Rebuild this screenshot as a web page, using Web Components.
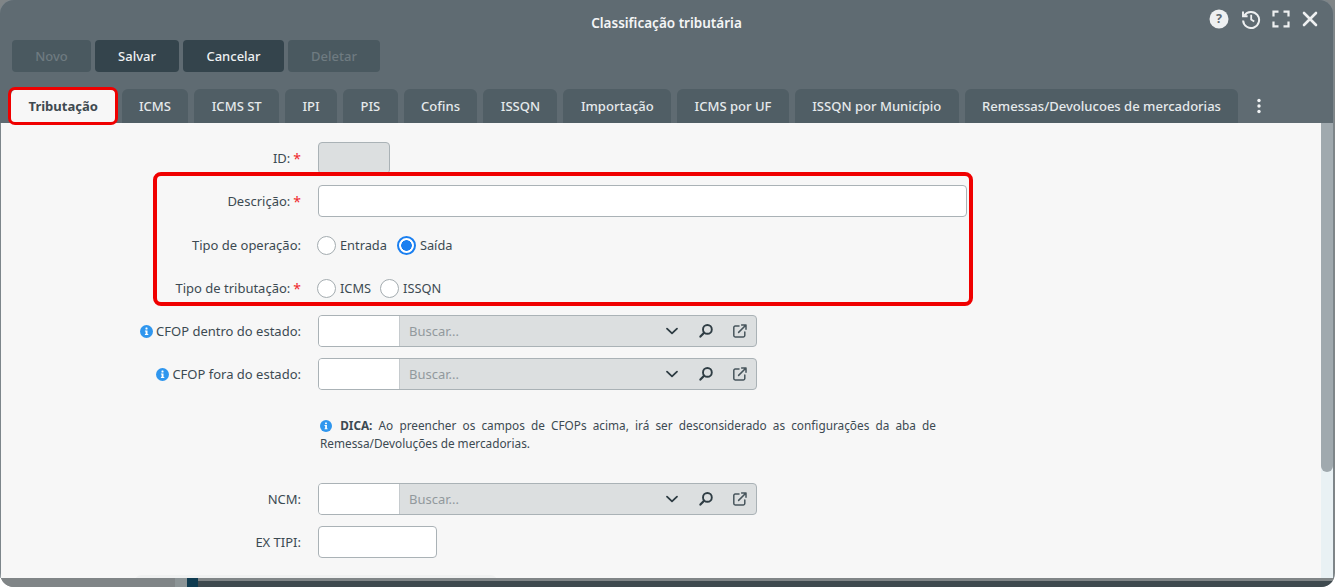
<!DOCTYPE html>
<html lang="pt-BR">
<head>
<meta charset="utf-8">
<title>Classificação tributária</title>
<style>
	html, body { margin: 0; height: 100%; overflow: hidden; background: #fff; }
	body { font-family: "Noto Sans", "Open Sans", sans-serif; font-size: 13px; color: #3c4a52; }
</style>
</head>
<body>
<modal-window heading="Classificação tributária">
	<action-button slot="toolbar" disabled style="--w:79px">Novo</action-button>
	<action-button slot="toolbar" style="--w:84px">Salvar</action-button>
	<action-button slot="toolbar" style="--w:101px">Cancelar</action-button>
	<action-button slot="toolbar" disabled style="--w:92px">Deletar</action-button>

	<tab-item slot="tabs" active>Tributação</tab-item>
	<tab-item slot="tabs">ICMS</tab-item>
	<tab-item slot="tabs">ICMS ST</tab-item>
	<tab-item slot="tabs">IPI</tab-item>
	<tab-item slot="tabs">PIS</tab-item>
	<tab-item slot="tabs">Cofins</tab-item>
	<tab-item slot="tabs">ISSQN</tab-item>
	<tab-item slot="tabs">Importação</tab-item>
	<tab-item slot="tabs">ICMS por UF</tab-item>
	<tab-item slot="tabs">ISSQN por Município</tab-item>
	<tab-item slot="tabs">Remessas/Devolucoes de mercadorias</tab-item>

	<form-row label="ID:" required><text-field width="72" readonly></text-field></form-row>
	<highlight-box>
		<form-row label="Descrição:" required style="margin-bottom:12px"><text-field width="649"></text-field></form-row>
		<form-row label="Tipo de operação:">
			<radio-option>Entrada</radio-option>
			<radio-option checked>Saída</radio-option>
		</form-row>
		<form-row label="Tipo de tributação:" required>
			<radio-option>ICMS</radio-option>
			<radio-option style="margin-left:-2px">ISSQN</radio-option>
		</form-row>
	</highlight-box>
	<form-row label="CFOP dentro do estado:" info><lookup-field></lookup-field></form-row>
	<form-row label="CFOP fora do estado:" info><lookup-field></lookup-field></form-row>
	<hint-note><b>DICA:</b> Ao preencher os campos de CFOPs acima, irá ser desconsiderado as configurações da aba de Remessa/Devoluções de mercadorias.</hint-note>
	<form-row label="NCM:"><lookup-field></lookup-field></form-row>
	<form-row label="EX TIPI:"><text-field width="119"></text-field></form-row>
	<collapsed-panel></collapsed-panel>
</modal-window>

<script>
const INFO_ICON = `<svg width="13" height="13" viewBox="0 0 13 13" aria-hidden="true"><circle cx="6.5" cy="6.5" r="6.5" fill="#2f96ee"/><rect x="5.5" y="2.6" width="2" height="1.9" rx=".5" fill="#fff"/><path d="M4.9 5.5h2.6v3.6h.8v1H4.9v-1h.7V6.5h-.7z" fill="#fff"/></svg>`;

class ModalWindow extends HTMLElement {
	constructor() {
		super();
		this.attachShadow({ mode: 'open' });
		this.shadowRoot.innerHTML = `
			<style>
				:host { display: flex; flex-direction: column; width: 1335px; height: 587px; overflow: hidden; border-radius: 0 0 14px 14px; background: #808587; }
				.window { flex: none; width: 1333px; height: 578px; display: flex; flex-direction: column; background: #5f6b72; border-radius: 14px 14px 0 0; overflow: hidden; box-shadow: 0 0 0 1px #7d868b; }
				header { flex: none; height: 40px; position: relative; display: flex; align-items: center; justify-content: center; box-sizing: border-box; padding-top: 6px; color: #f4f5f6; font-weight: 600; font-size: 13.5px; }
				.icons { position: absolute; right: 14px; top: 9px; display: flex; gap: 11px; align-items: center; }
				.icons svg { display: block; }
				.toolbar { flex: none; height: 32px; padding-left: 12px; display: flex; gap: 4px; }
				.tabs { flex: none; height: 34px; margin-top: 17px; padding-left: 11px; display: flex; gap: 6px; align-items: stretch; position: relative; z-index: 2; }
				.more { width: 30px; display: flex; align-items: center; justify-content: center; }
				.body { flex: 1; min-height: 0; display: flex; background: #f7f7f7; border-left: 1px solid #7d868b; }
				.content { flex: 1; min-width: 0; overflow: hidden; padding-top: 19px; display: flex; flex-direction: column; }
				.scrollbar { flex: none; width: 12px; background: #e9f1f4; }
				.thumb { height: 349px; background: #a0a9ae; border-radius: 0 0 6px 6px; }
				.strip { flex: 1; display: flex; }
				.strip .grey { width: 175px; background: #808587; }
				.strip .light { width: 12px; background: #8c9496; }
				.strip .blue { width: 11px; background: #0f3b50; }
				.strip .dark { flex: 1; background: linear-gradient(#808587 0 3px, #3f4a4f 3px); }
			</style>
			<div class="window">
				<header>
					<span id="heading"></span>
					<div class="icons">
						<svg width="20" height="20" viewBox="0 0 20 20" style="margin-right:1px"><circle cx="10" cy="10" r="9.5" fill="#eef0f1"/><text x="10" y="14.4" text-anchor="middle" font-family="Noto Sans, sans-serif" font-weight="700" font-size="12.5" fill="#5f6b72">?</text></svg>
						<svg width="20" height="20" viewBox="0 0 20 20" fill="none" stroke="#eef0f1" stroke-width="2"><path d="M3.4 6.6A8 8 0 1 1 2.1 11.5"/><path d="M2 2.6v4.6h4.6" stroke-width="1.9"/><path d="M10.2 5.8v4.8l3 2" stroke-width="1.8"/></svg>
						<svg width="18" height="18" viewBox="0 0 18 18" fill="none" stroke="#eef0f1" stroke-width="2.2"><path d="M1.5 6.5V1.6h5M11.5 1.6h5v4.9M16.5 11.5v4.9h-5M6.5 16.4h-5v-4.9"/></svg>
						<svg width="18" height="18" viewBox="0 0 18 18" fill="none" stroke="#eef0f1" stroke-width="2.6" stroke-linecap="round"><path d="M3 3l12 12M15 3L3 15"/></svg>
					</div>
				</header>
				<div class="toolbar"><slot name="toolbar"></slot></div>
				<div class="tabs">
					<slot name="tabs"></slot>
					<div class="more"><svg width="4" height="16" viewBox="0 0 4 16" fill="#f2f4f5"><circle cx="2" cy="2.5" r="1.7"/><circle cx="2" cy="8" r="1.7"/><circle cx="2" cy="13.5" r="1.7"/></svg></div>
				</div>
				<div class="body">
					<div class="content"><slot></slot></div>
					<div class="scrollbar"><div class="thumb"></div></div>
				</div>
			</div>
			<div class="strip"><div class="grey"></div><div class="light"></div><div class="blue"></div><div class="dark"></div></div>
		`;
		this.shadowRoot.getElementById('heading').textContent = this.getAttribute('heading');
	}
}
customElements.define('modal-window', ModalWindow);

class ActionButton extends HTMLElement {
	constructor() {
		super();
		this.attachShadow({ mode: 'open' });
		this.shadowRoot.innerHTML = `
			<style>
				:host { display: flex; align-items: center; justify-content: center; width: var(--w); height: 32px; border-radius: 4px; background: #34444c; color: #eef1f2; font-weight: 500; font-size: 13px; }
				:host([disabled]) { background: #4a5960; color: #6f7b81; }
			</style>
			<slot></slot>
		`;
	}
}
customElements.define('action-button', ActionButton);

class TabItem extends HTMLElement {
	constructor() {
		super();
		this.attachShadow({ mode: 'open' });
		this.shadowRoot.innerHTML = `
			<style>
				:host { position: relative; display: flex; align-items: center; padding: 0 17.4px; border-radius: 6px 6px 0 0; background: #505e65; color: #e6eaec; font-weight: 500; font-size: 13.05px; white-space: nowrap; }
				:host([active]) { padding: 0 17.5px; background: #f7f7f7; color: #3f4a50; font-weight: 700; }
				:host([active])::after { content: ""; position: absolute; left: -3px; right: -2px; top: -2px; bottom: -2px; border: 3px solid #f00000; border-radius: 7px; }
			</style>
			<slot></slot>
		`;
	}
}
customElements.define('tab-item', TabItem);

class FormRow extends HTMLElement {
	constructor() {
		super();
		this.attachShadow({ mode: 'open' });
		const star = this.hasAttribute('required') ? ' <span class="req">*</span>' : '';
		const info = this.hasAttribute('info') ? INFO_ICON : '';
		this.shadowRoot.innerHTML = `
			<style>
				:host { flex: none; display: grid; grid-template-columns: 300px 1fr; column-gap: 17px; height: 32px; margin-bottom: 11px; align-items: center; }
				.label { display: flex; justify-content: flex-end; align-items: center; gap: 3px; font-size: 13px; white-space: pre; }
				.req { color: #f0282d; font-size: 14px; }
				.control { display: flex; align-items: center; gap: 11px; }
			</style>
			<div class="label">${info}<span id="text"></span>${star}</div>
			<div class="control"><slot></slot></div>
		`;
		this.shadowRoot.getElementById('text').textContent = this.getAttribute('label');
	}
}
customElements.define('form-row', FormRow);

class TextField extends HTMLElement {
	constructor() {
		super();
		this.attachShadow({ mode: 'open' });
		this.shadowRoot.innerHTML = `
			<style>
				:host { display: block; box-sizing: border-box; height: 32px; width: ${this.getAttribute('width')}px; border: 1px solid #aab2b6; border-radius: 4px; background: #fff; }
				:host([readonly]) { background: #dcdfe0; }
			</style>
		`;
	}
}
customElements.define('text-field', TextField);

class RadioOption extends HTMLElement {
	constructor() {
		super();
		this.attachShadow({ mode: 'open' });
		this.shadowRoot.innerHTML = `
			<style>
				:host { display: inline-flex; align-items: center; gap: 4px; font-size: 12.8px; margin-left: -1px; }
				i { box-sizing: border-box; width: 19px; height: 19px; border-radius: 50%; border: 1px solid #a4acb0; background: #fff; display: block; }
				:host([checked]) i { border: 2px solid #1a7ff0; background: radial-gradient(circle, #1a7ff0 0 5px, #fff 5.6px); }
			</style>
			<i></i><span><slot></slot></span>
		`;
	}
}
customElements.define('radio-option', RadioOption);

class LookupField extends HTMLElement {
	constructor() {
		super();
		this.attachShadow({ mode: 'open' });
		this.shadowRoot.innerHTML = `
			<style>
				:host { display: flex; box-sizing: border-box; width: 439px; height: 32px; border: 1px solid #aab2b6; border-radius: 4px; background: #dcdfe0; overflow: hidden; }
				.code { width: 80px; background: #fff; border-right: 1px solid #c6cbce; }
				.search { flex: 1; display: flex; align-items: center; padding-left: 9px; color: #92999d; font-size: 13px; }
				.btns { display: flex; align-items: center; gap: 18px; padding-right: 8px; }
				svg { display: block; }
			</style>
			<div class="code"></div>
			<div class="search">Buscar...</div>
			<div class="btns">
				<svg width="16" height="16" viewBox="0 0 16 16" fill="none" stroke="#2f3d44" stroke-width="1.8" stroke-linecap="round" stroke-linejoin="round"><path d="M3 5.6l5 4.8 5-4.8"/></svg>
				<svg width="16" height="16" viewBox="0 0 16 16" fill="none" stroke="#2f3d44" stroke-width="1.9" stroke-linecap="round"><circle cx="9.4" cy="6.4" r="4.4"/><path d="M6.1 9.7L2.4 13.6" stroke-width="2.2"/></svg>
				<svg width="16" height="16" viewBox="0 0 16 16" fill="none" stroke="#47555c" stroke-width="1.5" stroke-linecap="round" stroke-linejoin="round"><path d="M7 3H3.2A1.4 1.4 0 0 0 1.8 4.4v8.2A1.4 1.4 0 0 0 3.2 14h8.2a1.4 1.4 0 0 0 1.4-1.4V9"/><path d="M6.6 9.4L14 2M9.6 1.9H14v4.4"/></svg>
			</div>
		`;
	}
}
customElements.define('lookup-field', LookupField);

class HighlightBox extends HTMLElement {
	constructor() {
		super();
		this.attachShadow({ mode: 'open' });
		this.shadowRoot.innerHTML = `
			<style>
				:host { display: block; position: relative; }
				.frame { position: absolute; left: 152px; top: -13px; width: 820px; height: 134px; box-sizing: border-box; border: 4px solid #f00000; border-radius: 8px; pointer-events: none; }
			</style>
			<slot></slot>
			<div class="frame"></div>
		`;
	}
}
customElements.define('highlight-box', HighlightBox);

class HintNote extends HTMLElement {
	constructor() {
		super();
		this.attachShadow({ mode: 'open' });
		this.shadowRoot.innerHTML = `
			<style>
				:host { flex: none; display: block; width: 616px; height: 36px; margin: 15px 0 31px 319px; font-size: 11.8px; line-height: 18px; text-align: justify; }
				svg { vertical-align: -2px; margin-right: 2px; }
			</style>
			<svg width="12" height="12" viewBox="0 0 13 13"><circle cx="6.5" cy="6.5" r="6.5" fill="#2f96ee"/><rect x="5.5" y="2.6" width="2" height="1.9" rx=".5" fill="#fff"/><path d="M4.9 5.5h2.6v3.6h.8v1H4.9v-1h.7V6.5h-.7z" fill="#fff"/></svg>
			<slot></slot>
		`;
	}
}
customElements.define('hint-note', HintNote);

class CollapsedPanel extends HTMLElement {
	constructor() {
		super();
		this.attachShadow({ mode: 'open' });
		this.shadowRoot.innerHTML = `
			<style>
				:host { flex: none; display: block; width: 362px; height: 20px; margin: 6px 0 0 134px; background: #f0f1f1; border-radius: 6px 6px 0 0; }
			</style>
		`;
	}
}
customElements.define('collapsed-panel', CollapsedPanel);
</script>
</body>
</html>
